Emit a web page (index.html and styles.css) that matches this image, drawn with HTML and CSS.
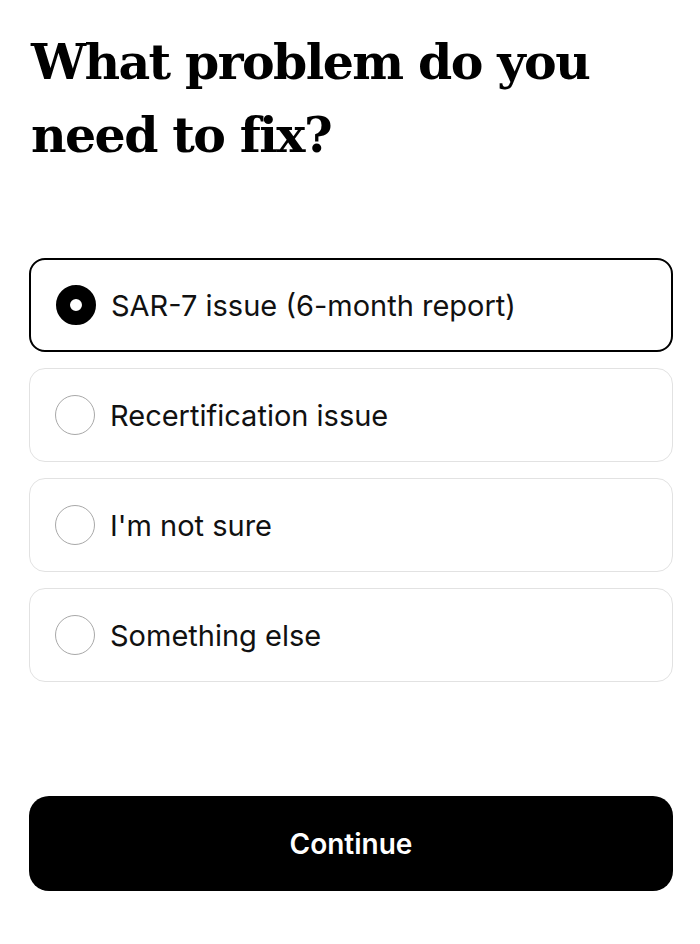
FILE: index.html
```html
<!DOCTYPE html>
<html lang="en">
<head>
  <meta charset="UTF-8" />
  <meta name="viewport" content="width=device-width, initial-scale=1" />
  <title>What problem do you need to fix?</title>
  <link rel="stylesheet" href="styles.css">
</head>
<body>
  <main class="screen">
    <h1 class="question">What problem do you<br>need to fix?</h1>

    <div class="options">
      <label class="option selected">
        <span class="radio"></span>
        <span class="option-text">SAR-7 issue (6-month report)</span>
      </label>
      <label class="option">
        <span class="radio"></span>
        <span class="option-text">Recertification issue</span>
      </label>
      <label class="option">
        <span class="radio"></span>
        <span class="option-text">I'm not sure</span>
      </label>
      <label class="option">
        <span class="radio"></span>
        <span class="option-text">Something else</span>
      </label>
    </div>

    <button class="continue-btn">Continue</button>
  </main>
</body>
</html>
```

FILE: styles.css
```css
body {
  background-color: #fff;
  color: #000;
  font-family: 'Inter', 'Liberation Sans', sans-serif;
  margin: 0;
  padding: 0;
}
.screen {
  padding: 26px 27px 0 29px;
  display: flex;
  flex-direction: column;
}
.question {
  font-family: 'DejaVu Serif', serif;
  font-weight: 700;
  font-size: 49px;
  line-height: 73px;
  margin: 0 0 0 2px;
  letter-spacing: -1.6px;
}
.options {
  margin-top: 86px;
  display: flex;
  flex-direction: column;
  gap: 16px;
}
.option {
  height: 94px;
  box-sizing: border-box;
  border: 1.5px solid #e2e2e2;
  border-radius: 16px;
  display: flex;
  align-items: center;
  padding-left: 25px;
  gap: 15px;
}
.option.selected {
  border: 2px solid #000;
}
.radio {
  width: 40px;
  height: 40px;
  box-sizing: border-box;
  border-radius: 50%;
  border: 1.5px solid #a8a8a8;
  flex-shrink: 0;
}
.option.selected .radio {
  border: 14px solid #000;
}
.option-text {
  font-size: 29px;
  color: #111;
}
.continue-btn {
  margin-top: 114px;
  height: 95px;
  width: 100%;
  border: none;
  border-radius: 20px;
  background-color: #000;
  color: #fff;
  font-family: 'Inter', 'Liberation Sans', sans-serif;
  font-weight: 600;
  font-size: 28px;
}
```
